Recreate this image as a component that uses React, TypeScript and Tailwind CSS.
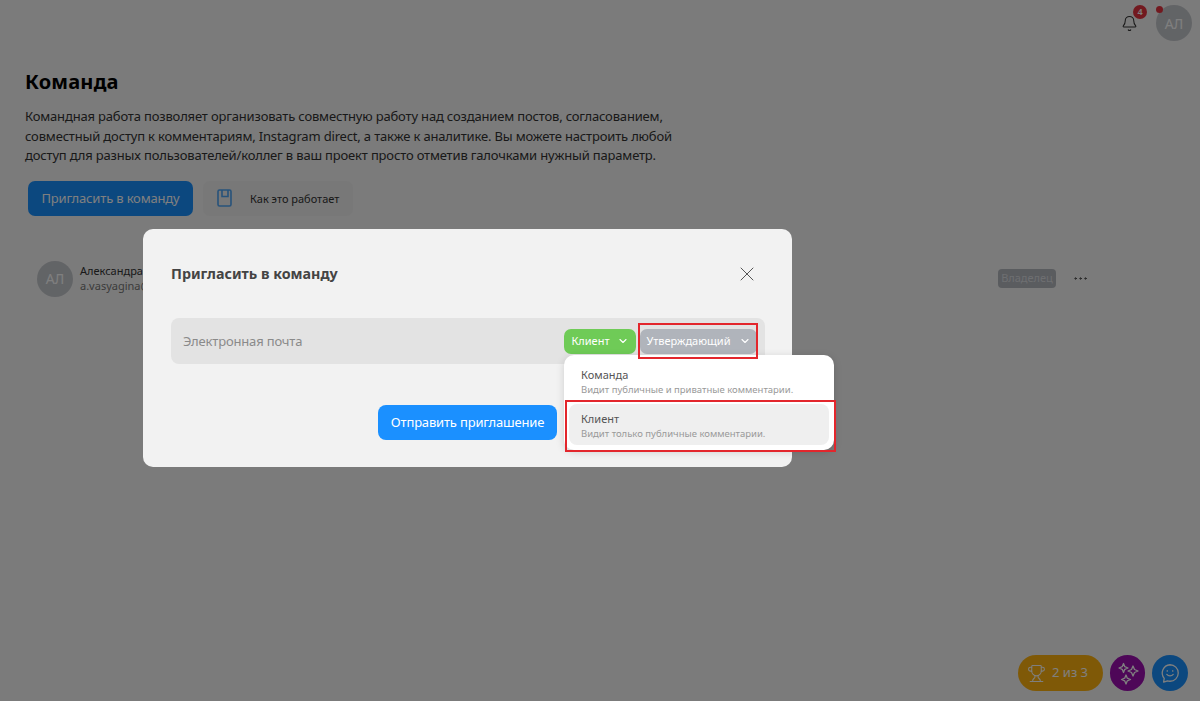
import { ChevronDown, X, Bell, Trophy, MoreHorizontal } from 'lucide-react';

const FONT = "font-['Noto_Sans','Open_Sans',sans-serif]";

function Sparkles() {
    return (
        <svg width="24" height="24" viewBox="0 0 24 24" fill="none" stroke="currentColor" strokeWidth="1.3" strokeLinejoin="round">
            <path d="M7.500 2.500l1.300 3.200 3.200 1.300-3.200 1.300-1.300 3.200-1.300-3.200L3 7l3.200-1.300z" />
            <path d="M17 5l1.500 3.500L22 10l-3.500 1.500L17 15l-1.500-3.500L12 10l3.500-1.500z" />
            <path d="M10 14l1.300 3.200 3.200 1.300-3.200 1.300-1.300 3.200-1.300-3.200-3.200-1.300 3.200-1.300z" />
        </svg>
    );
}

function Bookmark() {
    return (
        <svg width="15" height="18" viewBox="0 0 15 18" fill="none" stroke="#4ea5f5" strokeWidth="1.6">
            <rect x="1" y="1" width="13" height="16" rx="1.5" />
            <path d="M5 1v6.500h6V1" />
        </svg>
    );
}

function ChatSmile() {
    return (
        <svg width="22" height="22" viewBox="0 0 24 24" fill="none" stroke="currentColor" strokeWidth="1.4" strokeLinecap="round" strokeLinejoin="round">
            <path d="M12 3a9 9 0 0 1 0 18c-1 0-1.800-.1-2.700-.4L5 22l.7-4.200A9 9 0 0 1 12 3z" />
            <path d="M8.500 13.500c1.800 2.200 5.200 2.200 7 0" />
            <path d="M9 9.500v.5M15 9.500v.5" />
        </svg>
    );
}

export default function App() {
    return (
        <div className={`relative h-[701px] w-[1200px] overflow-hidden bg-[#f6f6f6] ${FONT}`}>
            {/* Page behind the dialog */}
            <header className="flex h-[45px] items-start justify-end pr-[8px] pt-[5px]">
                <div className="relative mr-[18px] mt-[10px] text-[#333]">
                    <Bell size={17} strokeWidth={1.5} />
                    <span className="absolute left-[12px] top-[-10px] flex h-[14px] w-[14px] items-center justify-center rounded-full bg-[#e5333f] text-[9px] font-semibold text-white">
                        4
                    </span>
                </div>
                <div className="relative flex h-[36px] w-[36px] items-center justify-center rounded-full bg-[#c5c8cd] text-[14px] text-white">
                    АЛ
                    <span className="absolute left-0 top-[1px] h-[7px] w-[7px] rounded-full bg-[#e5333f]" />
                </div>
            </header>

            <main className="pl-[25px]">
                <h1 className="mt-[23px] text-[20px] leading-[28px] font-bold tracking-[0.2px] text-black">Команда</h1>
                <p className="mt-[11px] w-[680px] text-[13px] leading-[19.500px] tracking-[-0.17px] text-[#333]">
                    Командная работа позволяет организовать совместную работу над созданием постов, согласованием,
                    <br />
                    совместный доступ к комментариям, Instagram direct, а также к аналитике. Вы можете настроить любой
                    <br />
                    доступ для разных пользователей/коллег в ваш проект просто отметив галочками нужный параметр.
                </p>
                <div className="mt-[15px] ml-[3px] flex items-center gap-[10px]">
                    <button className="h-[35px] w-[165px] rounded-[7px] bg-[#1890ff] pt-[2px] text-[13px] tracking-[-0.17px] text-white">
                        Пригласить в команду
                    </button>
                    <button className="flex h-[35px] w-[150px] items-center rounded-[7px] bg-[#f0f0f0] pl-[14px] text-[11px] text-[#333]">
                        <Bookmark />
                        <span className="ml-[18px] pt-[2px]">Как это работает</span>
                    </button>
                </div>

                <div className="mt-[44px] ml-[12px] flex h-[38px] items-center pr-[111px]">
                    <div className="flex h-[36px] w-[36px] items-center justify-center rounded-full bg-[#c5c8cd] text-[14px] text-white">
                        АЛ
                    </div>
                    <div className="ml-[7px] whitespace-nowrap pb-[2px] text-[11px] leading-[15px]">
                        <div className="text-[#333]">Александра</div>
                        <div className="text-[#777]">a.vasyagina@</div>
                    </div>
                    <span className="ml-auto flex h-[19px] w-[58px] items-center justify-center rounded-[4px] bg-[#b4b8bf] text-[11px] text-[#dcdee2]">
                        Владелец
                    </span>
                    <MoreHorizontal className="ml-[16px] text-[#444]" size={17} strokeWidth={1.4} />
                </div>
            </main>

            <div className="absolute bottom-[10px] right-[12px] flex items-center gap-[7px]">
                <div className="flex h-[36px] w-[85px] items-center gap-[6px] rounded-full bg-[#ffb30f] pl-[9px] text-[13px] text-white">
                    <Trophy size={19} strokeWidth={1.3} />
                    <span>2 из 3</span>
                </div>
                <div className="flex h-[36px] w-[35px] items-center justify-center rounded-full bg-[#9c0fb0] text-white">
                    <Sparkles />
                </div>
                <div className="flex h-[36px] w-[36px] items-center justify-center rounded-full bg-[#1890ff] text-white">
                    <ChatSmile />
                </div>
            </div>

            {/* Dim layer */}
            <div className="absolute inset-0 bg-black/50" />

            {/* Dialog */}
            <div className="absolute left-[143px] top-[229px] h-[238px] w-[649px] rounded-[10px] bg-[#f2f2f2] pl-[28px] pr-[27px]">
                <div className="flex h-[89px] items-center justify-between pr-[6px]">
                    <h2 className="text-[14.300px] font-bold text-[#444]">Пригласить в команду</h2>
                    <X size={24} strokeWidth={1} className="text-[#555]" />
                </div>
                <div className="flex h-[46px] items-center rounded-[8px] bg-[#e3e3e3] pl-[12px] pr-[8px] text-[13px] tracking-[-0.17px] text-[#8a8a8a]">
                    <span className="flex-1 pt-[2px]">Электронная почта</span>
                    <div className="flex items-center gap-[4px] text-[11px] tracking-normal text-white">
                        <span className="flex h-[25px] w-[72px] items-center justify-center gap-[7px] rounded-[7px] bg-[#6fcb57]">
                            Клиент
                            <ChevronDown size={12} strokeWidth={2.2} />
                        </span>
                        <span className="flex h-[25px] w-[117px] items-center justify-center gap-[8px] rounded-[7px] bg-[#b0b4bb]">
                            Утверждающий
                            <ChevronDown size={12} strokeWidth={2.2} />
                        </span>
                    </div>
                </div>
                <div className="mt-[41px] flex justify-end pr-[208px]">
                    <button className="h-[35px] w-[179px] rounded-[8px] bg-[#1b90ff] pt-[1px] text-[13px] tracking-[-0.17px] text-white">
                        Отправить приглашение
                    </button>
                </div>
            </div>

            {/* Dropdown */}
            <div className="absolute left-[564px] top-[355px] w-[270px] rounded-[10px] bg-white p-[5px] pt-[10px] shadow-[0_2px_8px_rgba(0,0,0,0.15)]">
                <div className="flex h-[34px] flex-col justify-center pl-[12px]">
                    <div className="text-[11px] leading-[16px] text-[#555]">Команда</div>
                    <div className="text-[9.500px] leading-[14px] text-[#999]">Видит публичные и приватные комментарии.</div>
                </div>
                <div className="mt-[5px] flex h-[41px] flex-col justify-center rounded-[8px] bg-[#efefef] pl-[12px] pt-[2px]">
                    <div className="text-[11px] leading-[16px] text-[#555]">Клиент</div>
                    <div className="text-[9.500px] leading-[14px] text-[#999]">Видит только публичные комментарии.</div>
                </div>
            </div>

            {/* Annotation frames */}
            <div className="absolute left-[638px] top-[323px] h-[36px] w-[120px] border-2 border-[#e3262c]" />
            <div className="absolute left-[565px] top-[400px] h-[52px] w-[271px] border-2 border-[#e3262c]" />
        </div>
    );
}
